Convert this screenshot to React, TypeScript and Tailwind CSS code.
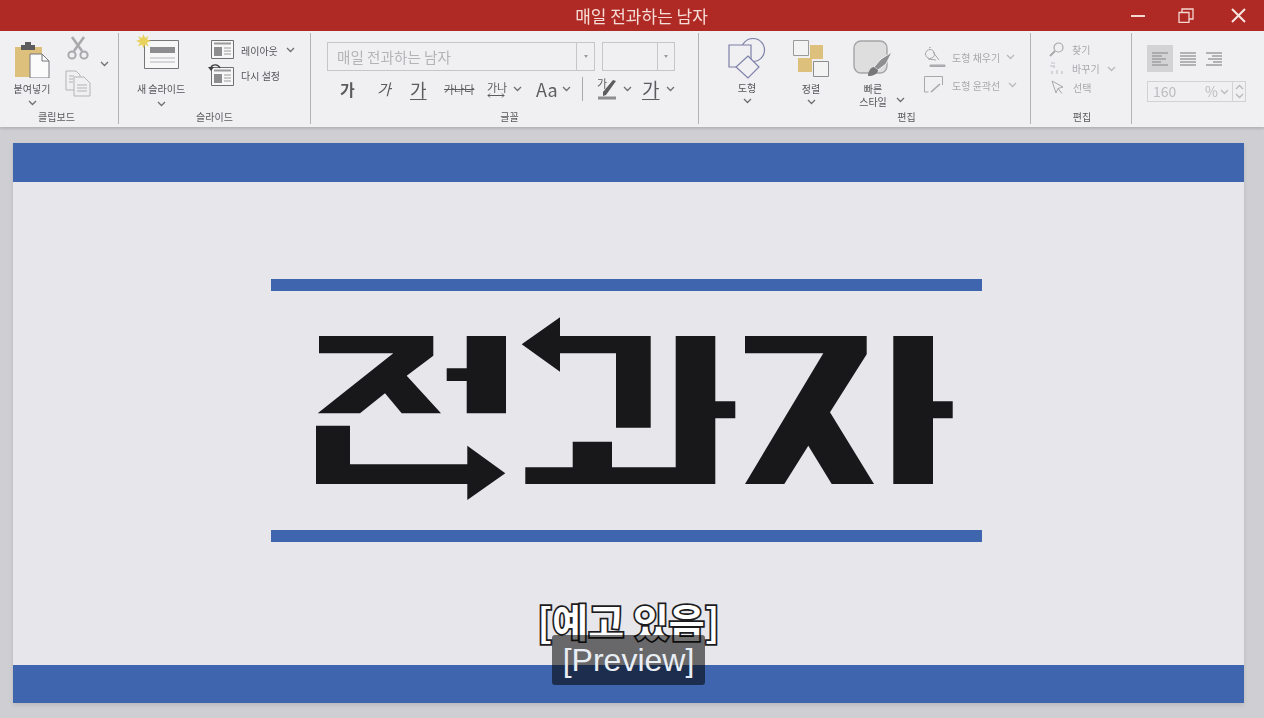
import type { ReactNode } from 'react';

const Chevron = ({ className = '', color = '#6f6f72' }: { className?: string; color?: string }) => (
	<svg width="9" height="6" viewBox="0 0 9 6" className={`shrink-0 ${className}`} fill="none" stroke={color} strokeWidth="1.300">
		<path d="M1 1l3.500 3.500L8 1" />
	</svg>
);

const GroupLabel = ({ children, className = '' }: { children: ReactNode; className?: string }) => (
	<div className={`h-[14px] text-center text-[10px] leading-[14px] text-[#5a5a5d] ${className}`}>{children}</div>
);

const PasteIcon = () => (
	<svg width="36" height="36" viewBox="0 0 36 36">
		<path d="M1 5h27v30H1z" fill="#dcc07c" />
		<path d="M7 3h14v5H7z" fill="#5c5c5e" />
		<path d="M11 0h6v4h-6z" fill="#5c5c5e" />
		<path d="M16 12h12l7 7v17H16z" fill="#fbfbfc" stroke="#77777a" />
		<path d="M28 12v7h7" fill="none" stroke="#77777a" />
	</svg>
);

const ScissorsIcon = () => (
	<svg width="22" height="24" viewBox="0 0 22 24" fill="none" stroke="#a9a9ac" strokeWidth="2">
		<circle cx="5" cy="19" r="3.600" />
		<circle cx="17" cy="19" r="3.600" />
		<path d="M7 15L17 1M15 15L5 1" strokeWidth="2.600" />
	</svg>
);

const CopyIcon = () => (
	<svg width="26" height="27" viewBox="0 0 26 27" fill="none" stroke="#b3b3b6">
		<path d="M1 1h10l4 4v15H1z" />
		<path d="M9 7h10l6 6v13H9z" fill="#f0eff2" />
		<path d="M12 15h10M12 18h10M12 21h10M4 6h5M4 9h4M4 12h4" />
	</svg>
);

const NewSlideIcon = () => (
	<svg width="44" height="36" viewBox="0 0 44 36">
		<path d="M8.500 6.500h34v28h-34z" fill="#f7f7f8" stroke="#77777a" />
		<path d="M14 13h25v6H14z" fill="#8d8d90" />
		<path d="M14 24h25M14 28h25" stroke="#b5b5b8" />
		<path d="M7.500 0l1.500 4 3.500-2-1.500 3.500 4 1.500-4 1.500 1.500 4-3.500-2-1.500 4-1.500-4-4 2 2-4-4-1.500 4-1.500-2-3.500 4 2z" fill="#e8d25c" />
	</svg>
);

const LayoutIcon = ({ undo = false }: { undo?: boolean }) => (
	<svg width={undo ? 27 : 24} height={undo ? 22 : 20} viewBox={undo ? '-3 -3 27 22' : '0 0 24 20'} fill="none">
		<path d="M.5.500h22v18H.5z" fill="#f7f7f8" stroke="#6f6f72" />
		<path d="M3 2.500h17v2H3z" fill="#9a9a9d" />
		<path d="M3 7h8v9H3z" fill="#8d8d90" />
		<path d="M13 8h7M13 11h7M13 14h7" stroke="#9a9a9d" />
		{undo && (
			<>
				<path d="M0 0c2-3 7-3 9 1" stroke="#3f3f42" strokeWidth="1.400" />
				<path d="M-3 0h6l-3 4z" fill="#3f3f42" />
			</>
		)}
	</svg>
);

const ShapesIcon = () => (
	<svg width="38" height="41" viewBox="0 0 38 41" fill="#f0eff2" stroke="#7d80a8" strokeWidth="1.200">
		<circle cx="25" cy="12" r="11.500" fill="none" />
		<path d="M1 7h22v22H1z" />
		<path d="M20 18l11 11-11 11L8 29z" />
	</svg>
);

const ArrangeIcon = () => (
	<svg width="36" height="37" viewBox="0 0 36 37">
		<path d="M.5.500h15v15H.5z" fill="#f3f3f4" stroke="#9a9a9d" />
		<path d="M17 5h13v14H17zM5 18h14v14H5z" fill="#dcc07c" />
		<path d="M20.500 21.500h15v15h-15z" fill="#f3f3f4" stroke="#8d8d90" />
	</svg>
);

const QuickStyleIcon = () => (
	<svg width="40" height="37" viewBox="0 0 40 37">
		<rect x="1" y="1" width="33" height="32" rx="7" fill="#dededf" stroke="#a5a5a8" strokeWidth="1.400" />
		<path d="M39 12L28 19l-7 8 4 3 8-6z" fill="#8f8f92" stroke="#f0eff2" />
		<path d="M15 36c0-5 3-9 6-9l4 3c0 4-5 6-10 6z" fill="#77777a" />
	</svg>
);

const FillIcon = () => (
	<svg width="22" height="20" viewBox="0 0 22 20" fill="none" stroke="#a8a8ab">
		<circle cx="6" cy="7" r="4.500" />
		<path d="M5 1l2-1M9 5l6 8M4 12l8 1" />
		<path d="M6 18h15v1.500H6z" fill="#b5b5b8" />
	</svg>
);

const OutlineIcon = () => (
	<svg width="20" height="18" viewBox="0 0 20 18" fill="none" stroke="#a8a8ab">
		<path d="M.5 13V.5h18V9M.5 13v3h4" />
		<path d="M7 16l9-8" strokeWidth="1.600" />
	</svg>
);

const SearchIcon = () => (
	<svg width="15" height="15" viewBox="0 0 15 15" fill="none" stroke="#a8a8ab" strokeWidth="1.200">
		<circle cx="9.500" cy="5.500" r="4.500" />
		<path d="M6 9l-5 5" strokeWidth="1.800" />
	</svg>
);

const ReplaceIcon = () => (
	<svg width="15" height="13" viewBox="0 0 15 13" fill="none" stroke="#c2c2c5" strokeWidth="1.200">
		<path d="M2 1h4M1 4h5M5 4v2M3 9v3M8 8v4M13 9v3" />
	</svg>
);

const SelectIcon = () => (
	<svg width="13" height="15" viewBox="0 0 13 15" fill="none" stroke="#a8a8ab">
		<path d="M1 1l11 6-5 1.500L5 13z" />
		<path d="M7 8.500l4 5" />
	</svg>
);

const AlignIcon = ({ side }: { side: 'left' | 'center' | 'right' }) => {
	const rows =
		side === 'left'
			? ['M0 1h16', 'M0 4h10', 'M0 7h14', 'M0 10h9', 'M0 13h16']
			: side === 'center'
				? ['M0 1h16', 'M0 4h16', 'M0 7h16', 'M0 10h16', 'M0 13h16']
				: ['M0 1h16', 'M6 4h10', 'M2 7h14', 'M7 10h9', 'M0 13h16'];
	return (
		<svg width="16" height="14" viewBox="0 0 16 14" fill="none" stroke="#a2a2a5" strokeWidth="1.600">
			{rows.map((d) => (
				<path key={d} d={d} />
			))}
		</svg>
	);
};

const Combo = ({ text, width, arrow }: { text?: string; width: string; arrow: string }) => (
	<div className={`flex h-[29px] items-center border border-[#c6c6c9] ${width}`}>
		<span className="flex-1 pl-[9px] text-[14.600px] text-[#b4b4b7]">{text}</span>
		<span className={`flex h-full items-center justify-center border-l border-[#c6c6c9] ${arrow}`}>
			<span className="h-0 w-0 border-x-[2.500px] border-t-[3px] border-x-transparent border-t-[#9a9a9d]" />
		</span>
	</div>
);

const LIGHT = '#b9b9bc';

const Ribbon = () => (
	<div className="flex h-[96px] bg-[#f0eff2] pt-[2px] text-[#555558] blur-[0.5px] shadow-[0_2px_2px_#b5b5b8]">
		{/* clipboard */}
		<section className="flex h-[91px] w-[119px] flex-col border-r border-[#b4b4b7]">
			<div className="flex flex-1 pl-[12px]">
				<div className="flex w-[40px] flex-col items-center pt-[9px]">
					<PasteIcon />
					<span className="mt-[5px] whitespace-nowrap text-[10px] leading-[12px]">붙여넣기</span>
					<Chevron className="mt-[5px]" />
				</div>
				<div className="ml-[13px] flex flex-col items-center pt-[3px]">
					<ScissorsIcon />
					<div className="mt-[10px]">
						<CopyIcon />
					</div>
				</div>
				<Chevron className="ml-[9px] mt-[28px]" />
			</div>
			<GroupLabel className="pr-[5px]">클립보드</GroupLabel>
		</section>

		{/* slides */}
		<section className="flex h-[91px] w-[192px] flex-col border-r border-[#b4b4b7]">
			<div className="flex flex-1 pl-[17px]">
				<div className="flex w-[50px] flex-col items-center pt-[1px]">
					<div className="-ml-[7px]">
						<NewSlideIcon />
					</div>
					<span className="mt-[13px] whitespace-nowrap text-[10px] leading-[12px]">새 슬라이드</span>
					<Chevron className="mt-[6px]" />
				</div>
				<div className="ml-[5px] flex flex-col pt-[6px]">
					<div className="flex h-[22px] items-center gap-[6px] pl-[20px]">
						<LayoutIcon />
						<span className="text-[10px]">레이아웃</span>
						<Chevron className="ml-[2px]" />
					</div>
					<div className="mt-[3px] flex items-center gap-[6px] pl-[17px]">
						<LayoutIcon undo />
						<span className="text-[10px]">다시 설정</span>
					</div>
				</div>
			</div>
			<GroupLabel>슬라이드</GroupLabel>
		</section>

		{/* font */}
		<section className="flex h-[91px] w-[388px] flex-col border-r border-[#b4b4b7]">
			<div className="flex flex-1 flex-col pl-[16px] pt-[9px]">
				<div className="flex gap-[7px]">
					<Combo text="매일 전과하는 남자" width="w-[268px]" arrow="w-[18px]" />
					<Combo width="w-[73px]" arrow="w-[17px]" />
				</div>
				<div className="mt-[6px] flex h-[24px] items-center text-[#5c5c5f]">
					<span className="ml-[13px] w-[37px] text-[16px] font-bold">가</span>
					<span className="w-[33px] text-[15px] italic">가</span>
					<span className="w-[34px] text-[18px] underline underline-offset-2">가</span>
					<span className="w-[43px] whitespace-nowrap text-[11px] line-through">가나다</span>
					<span className="relative flex w-[26px] flex-col text-[11px] leading-[12px]">
						가나
						<svg width="18" height="5" viewBox="0 0 18 5" fill="none" stroke="#5c5c5f">
							<path d="M1 2.500h16M3 .5l-2 2 2 2M15 .5l2 2-2 2" />
						</svg>
					</span>
					<Chevron />
					<span className="ml-[14px] w-[26px] text-[18px]">Aa</span>
					<Chevron />
					<span className="ml-[11px] h-[24px] w-px bg-[#a9a9ac]" />
					<span className="relative ml-[14px] w-[26px]">
						<svg width="20" height="24" viewBox="0 0 20 24" fill="none">
							<path d="M1 21h18" stroke="#8d8d90" strokeWidth="3" />
							<path d="M19 4L9 18l-3 1v-4L16 3z" fill="#5c5c5f" />
						</svg>
						<span className="absolute left-0 top-0 text-[11px] leading-[12px]">가</span>
					</span>
					<Chevron />
					<span className="ml-[10px] w-[24px] text-[19px] underline underline-offset-2">가</span>
					<Chevron />
				</div>
			</div>
			<GroupLabel className="pl-[10px]">글꼴</GroupLabel>
		</section>

		{/* drawing */}
		<section className="flex h-[91px] w-[332px] flex-col border-r border-[#b4b4b7]">
			<div className="flex flex-1 pl-[29px] pt-[5px]">
				<div className="flex w-[38px] flex-col items-center">
					<ShapesIcon />
					<span className="mt-[3px] text-[10px] leading-[12px]">도형</span>
					<Chevron className="mt-[4px]" />
				</div>
				<div className="ml-[27px] flex w-[36px] flex-col items-center pt-[2px]">
					<ArrangeIcon />
					<span className="mt-[6px] text-[10px] leading-[12px]">정렬</span>
					<Chevron className="mt-[4px]" />
				</div>
				<div className="ml-[24px] flex w-[40px] flex-col items-center pt-[2px]">
					<QuickStyleIcon />
					<span className="mt-[6px] text-[10px] leading-[12px]">빠른</span>
					<span className="text-[10px] leading-[13px]">스타일</span>
				</div>
				<Chevron className="ml-[3px] mt-[59px]" />
				<div className="ml-[19px] flex flex-col pt-[9px] text-[#a8a8ab]">
					<div className="flex h-[20px] items-center gap-[6px]">
						<FillIcon />
						<span className="text-[10px]">도형 채우기</span>
						<Chevron color={LIGHT} />
					</div>
					<div className="mt-[9px] flex h-[18px] items-center gap-[8px]">
						<OutlineIcon />
						<span className="text-[10px]">도형 윤곽선</span>
						<Chevron color={LIGHT} />
					</div>
				</div>
			</div>
			<GroupLabel className="pl-[84px]">편집</GroupLabel>
		</section>

		{/* editing */}
		<section className="flex h-[91px] w-[101px] flex-col border-r border-[#b4b4b7]">
			<div className="flex flex-1 flex-col gap-[4px] pl-[18px] pt-[9px] text-[10px] text-[#a8a8ab]">
				<div className="flex h-[15px] items-center gap-[8px]">
					<SearchIcon />
					<span>찾기</span>
				</div>
				<div className="flex h-[15px] items-center gap-[8px]">
					<ReplaceIcon />
					<span>바꾸기</span>
					<Chevron className="-ml-[1px]" color={LIGHT} />
				</div>
				<div className="flex h-[15px] items-center gap-[9px] pl-[2px]">
					<SelectIcon />
					<span>선택</span>
				</div>
			</div>
			<GroupLabel className="pl-[2px]">편집</GroupLabel>
		</section>

		{/* paragraph */}
		<section className="flex h-[91px] flex-1 flex-col pl-[15px] pt-[12px]">
			<div className="flex items-center">
				<span className="flex h-[27px] w-[26px] items-center justify-center bg-[#d3d3d5]">
					<AlignIcon side="left" />
				</span>
				<span className="ml-[7px]">
					<AlignIcon side="center" />
				</span>
				<span className="ml-[10px]">
					<AlignIcon side="right" />
				</span>
			</div>
			<div className="mt-[9px] flex h-[21px] w-[99px] items-center border border-[#d2d2d5] text-[14px] text-[#bcbcbf]">
				<span className="w-[57px] pl-[5px]">160</span>
				<span className="w-[12px]">%</span>
				<Chevron className="ml-[3px]" color={LIGHT} />
				<span className="ml-[3px] flex h-full flex-1 flex-col items-center justify-center gap-[3px] border-l border-[#d2d2d5]">
					<Chevron className="rotate-180" color={LIGHT} />
					<Chevron color={LIGHT} />
				</span>
			</div>
		</section>
	</div>
);

const Logo = () => (
	<svg width="711" height="186" viewBox="271 317 711 186" fill="#18171a" role="img" aria-label="전과자">
		<path d="M319 336h114.300v19.700l-26.600 20L441 413.300h-39.300L385 393.300l-25 20h-42.300l75.600-60H319z" />
		<path d="M466.700 336H506v77.300h-39.300v-32.300h-20v-12.700h20z" />
		<path d="M316 425.700h34v38.600h117.300v-18.600l38 27.600-38 26.700v-16H316z" />
		<path d="M521.700 344.300l38.300-27V336h90.700v91.700H616v-74.400h-56v18.400z" />
		<path d="M525.300 467.300h47.400v-25.600H612v25.600h63.700V336h39.600v65.300h20v17h-20V484h-190z" />
		<path d="M745 336h121.700v18.300L830 412.300 874 484h-42.300l-23.400-38.300-24 38.300H745l78.300-130.700H745z" />
		<path d="M893.300 336H933v65.300h19.700v17H933V484h-39.700z" />
	</svg>
);

const App = () => {
	return (
		<div className="relative flex h-[718px] w-[1264px] flex-col overflow-hidden bg-[#cfced2] font-['Noto_Sans_CJK_KR','Noto_Sans',sans-serif]">
			<header className="relative flex h-[31px] items-center justify-center bg-[#af2a25] pl-[19px] text-[17px] text-[#f6dcd6]">
				<span className="blur-[0.4px]">매일 전과하는 남자</span>
				<div className="absolute right-[18px] top-[8px] flex items-center blur-[0.3px]">
					<svg width="14" height="14" viewBox="0 0 14 14" stroke="#f6d8d2" strokeWidth="2">
						<path d="M0 7h14" />
					</svg>
					<svg className="ml-[33px]" width="16" height="15" viewBox="0 0 16 15" fill="none" stroke="#f6d8d2" strokeWidth="1.300">
						<path d="M1 4.500h10v10H1zM4 4V1h11v10h-3.500" />
					</svg>
					<svg className="ml-[37px]" width="15" height="15" viewBox="0 0 15 15" stroke="#f6e6e2" strokeWidth="2">
						<path d="M1 1l13 13M14 1L1 14" />
					</svg>
				</div>
			</header>

			<Ribbon />

			<main className="mx-[13px] mt-[16px] flex h-[560px] w-[1231px] flex-col bg-[#e7e6ea] shadow-[0_2px_4px_#b9b9bc]">
				<div className="h-[39px] bg-[#3e65ae]" />
				<div className="flex flex-1 flex-col items-center pr-[4px] pt-[97px]">
					<div className="h-[12px] w-[711px] bg-[#3e65ae]" />
					<div className="mt-[26px]">
						<Logo />
					</div>
					<div className="mt-[27px] h-[12px] w-[711px] bg-[#3e65ae]" />
				</div>
				<div className="h-[38px] bg-[#3e65ae]" />
			</main>

			{/* captions over the slide */}
			<div className="absolute left-0 right-0 top-[594px] flex flex-col items-center pr-[7px]">
				<span className="h-[41px] whitespace-nowrap text-[39px] font-bold leading-[52px] text-white [-webkit-text-stroke:3.500px_#1c1c1e] [paint-order:stroke_fill]">
					[예고 있음]
				</span>
				<span className="flex h-[50px] w-[153px] items-center justify-center rounded-[3px] bg-[#000000]/55 font-['Liberation_Sans',sans-serif] text-[32px] leading-none text-[#e9eef5]">
					[Preview]
				</span>
			</div>
		</div>
	);
};

export default App;
